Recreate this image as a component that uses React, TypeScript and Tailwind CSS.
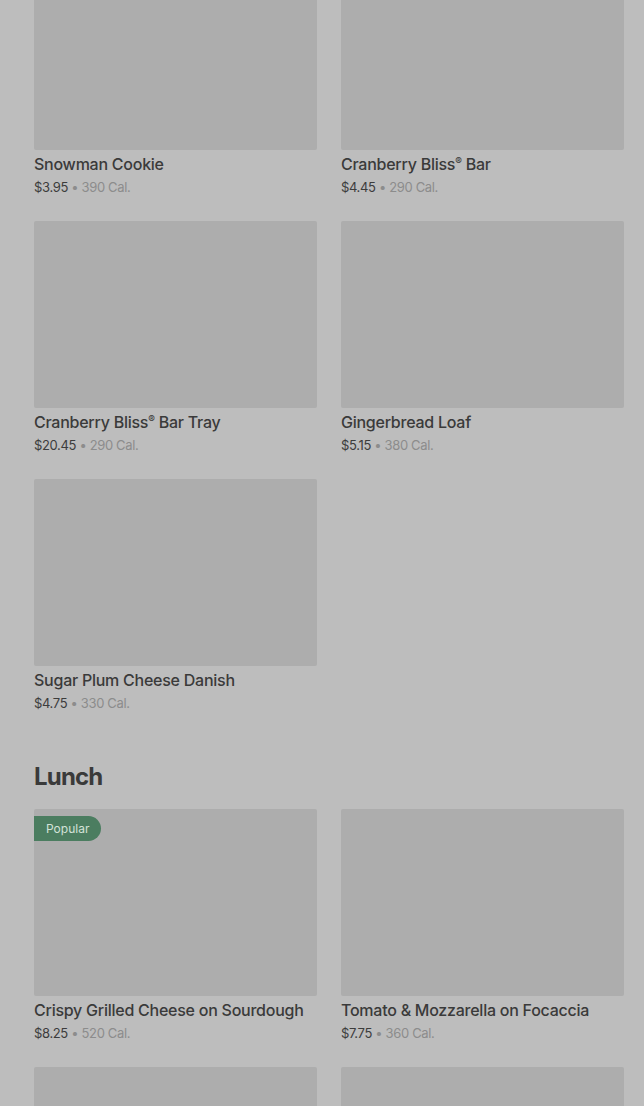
type Item = {
  name: string
  price: string
  cal: string
  popular?: boolean
}

const bakery: Item[] = [
  { name: "Snowman Cookie", price: "$3.95", cal: "390 Cal." },
  { name: "Cranberry Bliss® Bar", price: "$4.45", cal: "290 Cal." },
  { name: "Cranberry Bliss® Bar Tray", price: "$20.45", cal: "290 Cal." },
  { name: "Gingerbread Loaf", price: "$5.15", cal: "380 Cal." },
  { name: "Sugar Plum Cheese Danish", price: "$4.75", cal: "330 Cal." },
]

const lunch: Item[] = [
  { name: "Crispy Grilled Cheese on Sourdough", price: "$8.25", cal: "520 Cal.", popular: true },
  { name: "Tomato & Mozzarella on Focaccia", price: "$7.75", cal: "360 Cal." },
  { name: "", price: "", cal: "" },
  { name: "", price: "", cal: "" },
]

// splits the ® out so it can sit small and raised like the original
function ItemName({ name }: { name: string }) {
  const parts = name.split("®")
  return (
    <>
      {parts.map((p, i) => (
        <span key={i}>
          {p}
          {i < parts.length - 1 && (
            <span className="inline-block -translate-y-[5px] text-[10px] leading-none">®</span>
          )}
        </span>
      ))}
    </>
  )
}

function MenuCard({ item }: { item: Item }) {
  return (
    <div className="flex flex-col">
      <div className="relative h-[187px] w-full rounded-[2px] bg-[#adadad]">
        {item.popular && (
          <span className="absolute left-0 top-[7px] flex h-[25px] items-center rounded-r-full bg-[#4b7d60] pl-3 pr-3 text-[12px] text-[#d3e2d8]">
            Popular
          </span>
        )}
      </div>
      {item.name && (
        <>
          <div className="mt-1 h-5 text-[16px] font-medium leading-5 tracking-[-0.25px] text-[#3a3a3a]">
            <ItemName name={item.name} />
          </div>
          <div className="mt-[3px] h-5 text-[13px] leading-5 tracking-[-0.35px] text-[#3c3c3c]">
            {item.price}
            <span className="text-[#8c8c8c]"> • {item.cal}</span>
          </div>
        </>
      )}
    </div>
  )
}

export default function App() {
  return (
    <div
      className="h-[1106px] overflow-hidden bg-[#bdbdbd] pl-[34px] pr-[20px]"
      style={{ fontFamily: "Inter, 'Noto Sans', sans-serif" }}
    >
      <div className="-mt-[37px] grid grid-cols-2 gap-x-6 gap-y-6">
        {bakery.map((item) => (
          <MenuCard key={item.name} item={item} />
        ))}
      </div>
      <h2 className="mt-12 text-[24px] font-bold leading-8 tracking-[-0.8px] text-[#3a3a3a]">
        Lunch
      </h2>
      <div className="mt-4 grid grid-cols-2 gap-x-6 gap-y-6">
        {lunch.map((item, i) => (
          <MenuCard key={i} item={item} />
        ))}
      </div>
    </div>
  )
}
